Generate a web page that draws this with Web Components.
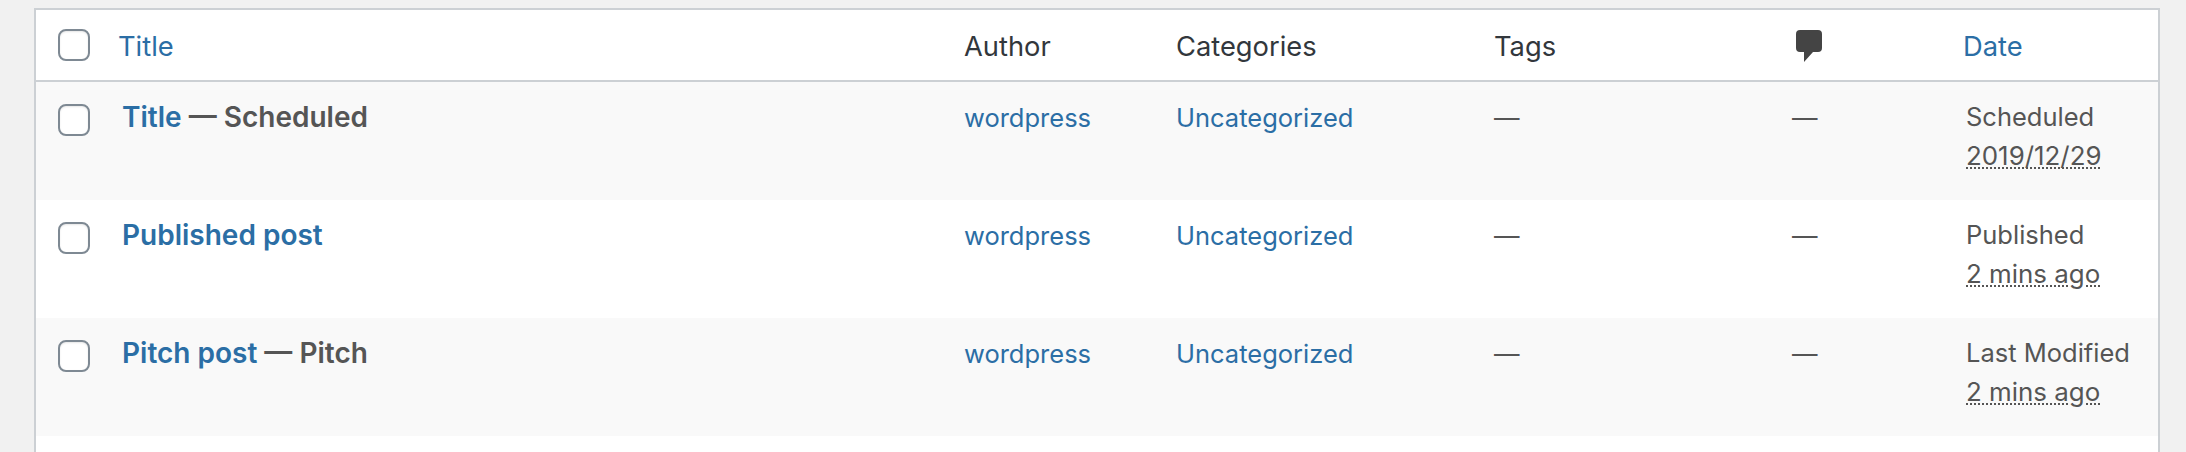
<!DOCTYPE html>
<html>
<head>
<meta charset="utf-8">
<title>Posts</title>
<style>
  html, body { margin: 0; padding: 0; background: #f1f1f1; }
  body { padding: 8px 26px 0 34px; height: 444px; overflow: hidden; font-family: Inter, "Liberation Sans", sans-serif; }
</style>
</head>
<body>
<post-table>
  <post-head></post-head>
  <post-row alt title-text="Title" state="Scheduled" status="Scheduled" when="2019/12/29"></post-row>
  <post-row title-text="Published post" status="Published" when="2 mins ago"></post-row>
  <post-row alt title-text="Pitch post" state="Pitch" status="Last Modified" when="2 mins ago"></post-row>
</post-table>

<script>
const COLUMNS = '82px 846px 212px 318px 298px 171px 1fr';

class RowCheck extends HTMLElement {
  constructor() {
    super();
    this.attachShadow({ mode: 'open' });
    this.shadowRoot.innerHTML = `
      <style>
        :host {
          display: block;
          box-sizing: border-box;
          width: 32px;
          height: 32px;
          margin-left: 22px;
          background: #fff;
          border: 2px solid #7e8993;
          border-radius: 8px;
          box-shadow: inset 0 1px 2px rgba(0, 0, 0, 0.1);
        }
      </style>
    `;
  }
}

class PostTable extends HTMLElement {
  constructor() {
    super();
    this.attachShadow({ mode: 'open' });
    this.shadowRoot.innerHTML = `
      <style>
        :host {
          display: block;
          box-sizing: border-box;
          height: 444px;
          background: #fff;
          border: 2px solid #ccd0d4;
          border-bottom: 0;
        }
      </style>
      <slot></slot>
    `;
  }
}

class PostHead extends HTMLElement {
  constructor() {
    super();
    this.attachShadow({ mode: 'open' });
    this.shadowRoot.innerHTML = `
      <style>
        :host {
          display: grid;
          grid-template-columns: ${COLUMNS};
          align-items: center;
          box-sizing: border-box;
          height: 72px;
          border-bottom: 2px solid #ccd0d4;
          font-size: 27.3px;
          color: #32373c;
        }
        span { padding-top: 2px; }
        .link { color: #2b6ea5; }
        svg { display: block; margin: 2px 0 0 4px; }
      </style>
      <row-check></row-check>
      <span class="link">Title</span>
      <span>Author</span>
      <span>Categories</span>
      <span>Tags</span>
      <svg width="26" height="32" viewBox="0 0 26 32" aria-hidden="true">
        <path fill="#444" d="M4 0h18a4 4 0 0 1 4 4v14a4 4 0 0 1-4 4h-5L8 32V22H4a4 4 0 0 1-4-4V4a4 4 0 0 1 4-4z"/>
      </svg>
      <span class="link">Date</span>
    `;
  }
}

class PostRow extends HTMLElement {
  constructor() {
    super();
    this.attachShadow({ mode: 'open' });
  }

  connectedCallback() {
    const state = this.getAttribute('state');
    this.shadowRoot.innerHTML = `
      <style>
        :host {
          display: grid;
          grid-template-columns: ${COLUMNS};
          box-sizing: border-box;
          height: 118px;
          padding-top: 16px;
          background: #fff;
          font-size: 25.5px;
          line-height: 39px;
          color: #555;
        }
        :host([alt]) { background: #f9f9f9; }
        row-check { margin-top: 6px; }
        a { color: #2b6ea5; text-decoration: none; }
        .title { padding-left: 4px; font-size: 28px; font-weight: 600; line-height: 39px; }
        .date { padding-left: 3px; margin-top: -1px; }
        abbr {
          font-size: 25.9px;
          text-decoration: underline dotted;
          text-decoration-thickness: 2px;
          text-underline-offset: 2px;
        }
      </style>
      <row-check></row-check>
      <div class="title"><a href="#">${this.getAttribute('title-text')}</a>${state ? ` — ${state}` : ''}</div>
      <div><a href="#">wordpress</a></div>
      <div><a href="#">Uncategorized</a></div>
      <div>—</div>
      <div>—</div>
      <div class="date">${this.getAttribute('status')}<br><abbr>${this.getAttribute('when')}</abbr></div>
    `;
  }
}

customElements.define('row-check', RowCheck);
customElements.define('post-table', PostTable);
customElements.define('post-head', PostHead);
customElements.define('post-row', PostRow);
</script>
</body>
</html>
